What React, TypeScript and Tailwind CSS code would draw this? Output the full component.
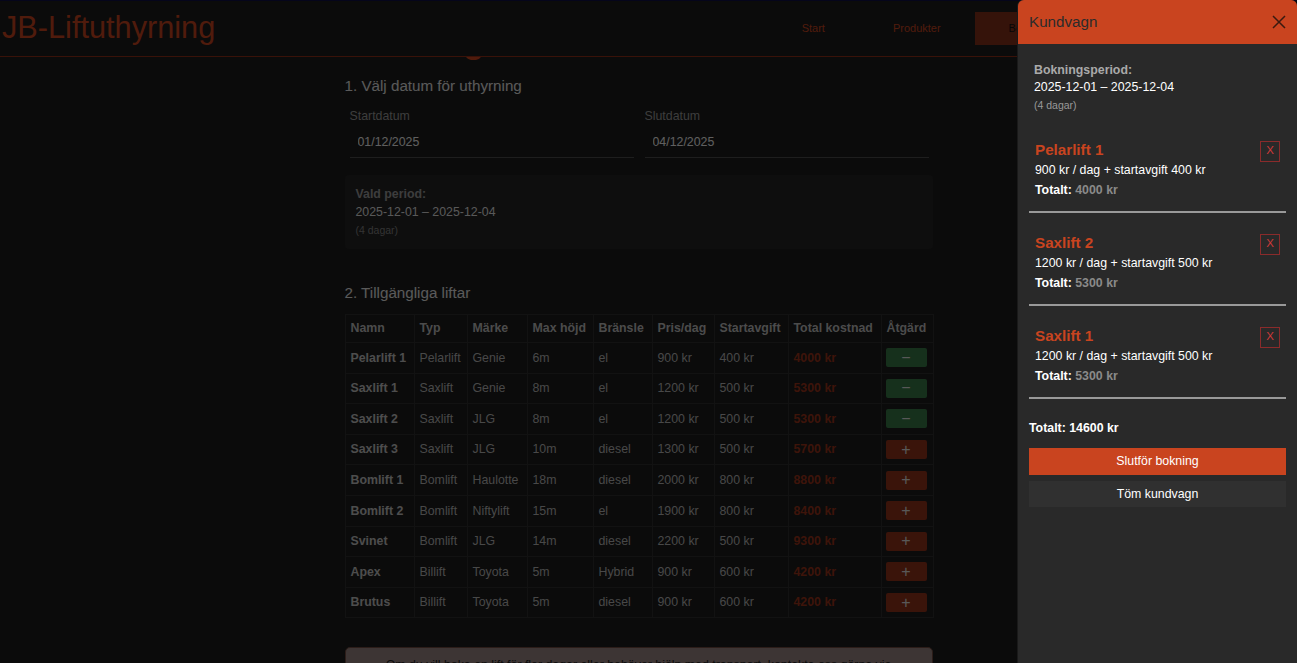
import { ShoppingCart } from "lucide-react";

type Lift = {
  name: string;
  typ: string;
  brand: string;
  height: string;
  fuel: string;
  price: number;
  startFee: number;
};

const DAYS = 4;

const lifts: Lift[] = [
  { name: "Pelarlift 1", typ: "Pelarlift", brand: "Genie", height: "6m", fuel: "el", price: 900, startFee: 400 },
  { name: "Saxlift 1", typ: "Saxlift", brand: "Genie", height: "8m", fuel: "el", price: 1200, startFee: 500 },
  { name: "Saxlift 2", typ: "Saxlift", brand: "JLG", height: "8m", fuel: "el", price: 1200, startFee: 500 },
  { name: "Saxlift 3", typ: "Saxlift", brand: "JLG", height: "10m", fuel: "diesel", price: 1300, startFee: 500 },
  { name: "Bomlift 1", typ: "Bomlift", brand: "Haulotte", height: "18m", fuel: "diesel", price: 2000, startFee: 800 },
  { name: "Bomlift 2", typ: "Bomlift", brand: "Niftylift", height: "15m", fuel: "el", price: 1900, startFee: 800 },
  { name: "Svinet", typ: "Bomlift", brand: "JLG", height: "14m", fuel: "diesel", price: 2200, startFee: 500 },
  { name: "Apex", typ: "Billift", brand: "Toyota", height: "5m", fuel: "Hybrid", price: 900, startFee: 600 },
  { name: "Brutus", typ: "Billift", brand: "Toyota", height: "5m", fuel: "diesel", price: 900, startFee: 600 },
];

const cartNames = ["Pelarlift 1", "Saxlift 2", "Saxlift 1"];

const totalFor = (lift: Lift) => lift.price * DAYS + lift.startFee;

const colWidths = [69, 53, 60, 66, 59, 62, 74, 93, 52];
const headers = ["Namn", "Typ", "Märke", "Max höjd", "Bränsle", "Pris/dag", "Startavgift", "Total kostnad", "Åtgärd"];

export default function App() {
  const cart = cartNames.map((n) => lifts.find((l) => l.name === n)!);
  const cartTotal = cart.reduce((sum, l) => sum + totalFor(l), 0);

  return (
    <div className="relative h-screen overflow-hidden bg-[#1c1c1c] font-['Liberation_Sans',Arial,sans-serif] text-[#e0e0e0]">
      <header className="relative z-10 flex h-[57px] items-center border-t border-b border-t-[#0e0e44] border-b-[#8f2f17] bg-[#1c1c1c] pl-[2px] pr-[44px]">
        <h1 className="text-[30.7px] leading-none text-[#c9441f]">JB-Liftuthyrning</h1>
        <nav className="ml-auto flex h-full items-center text-[11px]">
          <a className="px-[34px] text-[#c9441f]">Start</a>
          <a className="px-[34px] text-[#c9441f]">Produkter</a>
          <a className="flex h-[33px] items-center bg-[#853019] px-[34px] text-[#111]">Boka</a>
          <a className="px-[34px] text-[#c9441f]">Kontakt</a>
          <button type="button" className="flex w-[80px] items-center justify-center text-[#c9441f]">
            <ShoppingCart size={18} />
          </button>
        </nav>
      </header>

      <main className="mx-auto w-[608px] pr-5">
        <h2 className="-mt-[38px] text-[35px] font-bold leading-[44px] text-[#c9441f]">Bokning</h2>

        <section>
          <h3 className="mt-[11px] text-[15.2px] leading-[24px] text-[#e0e0e0]">1. Välj datum för uthyrning</h3>
          <div className="mt-[10px] grid grid-cols-2 gap-x-[11px] pl-[5px] pr-[4px]">
            {[
              ["Startdatum", "01/12/2025"],
              ["Slutdatum", "04/12/2025"],
            ].map(([label, value]) => (
              <label key={label} className="block">
                <span className="block text-[12.35px] leading-[17px] text-[#999]">{label}</span>
                <input
                  type="text"
                  readOnly
                  value={value}
                  className="mt-[1px] h-[32px] w-full border-b border-[#4b4b4b] bg-transparent pl-[8px] text-[12.35px] text-[#eee] outline-none"
                />
              </label>
            ))}
          </div>

          <div className="mt-[17px] h-[74px] rounded-[4px] bg-[#242424] px-[11px] pt-[10px] text-[12.35px] leading-[18px]">
            <div className="font-bold text-[#999]">Vald period:</div>
            <div className="text-[#ddd]">2025-12-01 – 2025-12-04</div>
            <div className="text-[10.5px] text-[#808080]">(4 dagar)</div>
          </div>
        </section>

        <section>
          <h3 className="mt-[32px] text-[15.2px] leading-[24px] text-[#e0e0e0]">2. Tillgängliga liftar</h3>
          <table className="mt-[9px] w-full table-fixed border-collapse text-[12.35px]">
            <colgroup>
              {colWidths.map((w, i) => (
                <col key={i} style={{ width: w }} />
              ))}
            </colgroup>
            <thead>
              <tr className="h-[28px]">
                {headers.map((h) => (
                  <th key={h} className="whitespace-nowrap border border-[#2e2e2e] px-[5px] text-left font-bold text-[#bbb]">
                    {h}
                  </th>
                ))}
              </tr>
            </thead>
            <tbody>
              {lifts.map((lift) => {
                const inCart = cartNames.includes(lift.name);
                return (
                  <tr key={lift.name} className="h-[30.6px] whitespace-nowrap text-[#b4b4b4]">
                    <td className="border border-[#2e2e2e] px-[5px] font-bold text-[#c0c0c0]">{lift.name}</td>
                    <td className="border border-[#2e2e2e] px-[5px]">{lift.typ}</td>
                    <td className="border border-[#2e2e2e] px-[5px]">{lift.brand}</td>
                    <td className="border border-[#2e2e2e] px-[5px]">{lift.height}</td>
                    <td className="border border-[#2e2e2e] px-[5px]">{lift.fuel}</td>
                    <td className="border border-[#2e2e2e] px-[5px]">{lift.price} kr</td>
                    <td className="border border-[#2e2e2e] px-[5px]">{lift.startFee} kr</td>
                    <td className="border border-[#2e2e2e] px-[5px] font-bold text-[#9a3219]">{totalFor(lift)} kr</td>
                    <td className="border border-[#2e2e2e] px-[4px]">
                      <button
                        type="button"
                        className={`flex h-[19px] w-[41px] items-center justify-center rounded-[2px] text-[16px] leading-none text-[#ddd] ${
                          inCart ? "bg-[#387848]" : "bg-[#91321a]"
                        }`}
                      >
                        {inCart ? "−" : "+"}
                      </button>
                    </td>
                  </tr>
                );
              })}
            </tbody>
          </table>
        </section>

        <div className="mt-[29px] rounded-[5px] border border-[#6e4a40] bg-[#998582] px-[30px] pt-[7px] pb-[10px] text-center text-[12.35px] leading-[20px] text-[#222]">
          Om du vill boka en lift för fler dagar eller behöver hjälp med transport, kontakta oss gärna via telefon eller e-post.
        </div>
      </main>

      <div className="absolute inset-0 z-20 bg-black/60" />

      <aside className="absolute right-0 top-0 z-30 flex h-full w-[280px] flex-col rounded-t-[6px] border-l border-[#1a1a1a] bg-[#292929]">
        <div className="flex h-[44px] items-center justify-between rounded-t-[6px] bg-[#c9441f] pl-[11px] pr-[11px]">
          <span className="text-[15.2px] text-[#2b2b2b]">Kundvagn</span>
          <svg width="14" height="14" viewBox="0 0 14 14" fill="none" stroke="#3a1a10" strokeWidth="1.5">
            <path d="M1 1L13 13M13 1L1 13" />
          </svg>
        </div>

        <div className="px-[11px] pt-[17.5px]">
          <div className="px-[5px] text-[12.35px] leading-[17px]">
            <div className="font-bold text-[#aaa]">Bokningsperiod:</div>
            <div className="text-white">2025-12-01 – 2025-12-04</div>
            <div className="text-[10.5px] leading-[19px] text-[#999]">(4 dagar)</div>
          </div>

          <div className="mt-[5px]">
            {cart.map((lift) => (
              <div
                key={lift.name}
                className="flex items-start justify-between border-b-2 border-[#999] px-[6px] pt-[20px] pb-[11px]"
              >
                <div>
                  <div className="text-[15.2px] font-bold leading-[20px] text-[#c9441f]">{lift.name}</div>
                  <div className="text-[12.35px] leading-[20px] text-white">
                    {lift.price} kr / dag + startavgift {lift.startFee} kr
                  </div>
                  <div className="text-[12.35px] font-bold leading-[20px] text-white">
                    Totalt: <span className="text-[#8a8a8a]">{totalFor(lift)} kr</span>
                  </div>
                </div>
                <button
                  type="button"
                  className="mt-[1px] flex h-[21px] w-[20px] items-center justify-center border border-[#8a2b2b] text-[11.5px] text-[#d03a3a]"
                >
                  X
                </button>
              </div>
            ))}
          </div>

          <div className="mt-[21.5px] text-[12.35px] font-bold leading-[17px] text-white">Totalt: {cartTotal} kr</div>
          <button type="button" className="mt-[11px] h-[27px] w-full bg-[#c9441f] text-[12.35px] text-white">
            Slutför bokning
          </button>
          <button type="button" className="mt-[6px] h-[26px] w-full bg-[#303030] text-[12.35px] text-white">
            Töm kundvagn
          </button>
        </div>
      </aside>
    </div>
  );
}
